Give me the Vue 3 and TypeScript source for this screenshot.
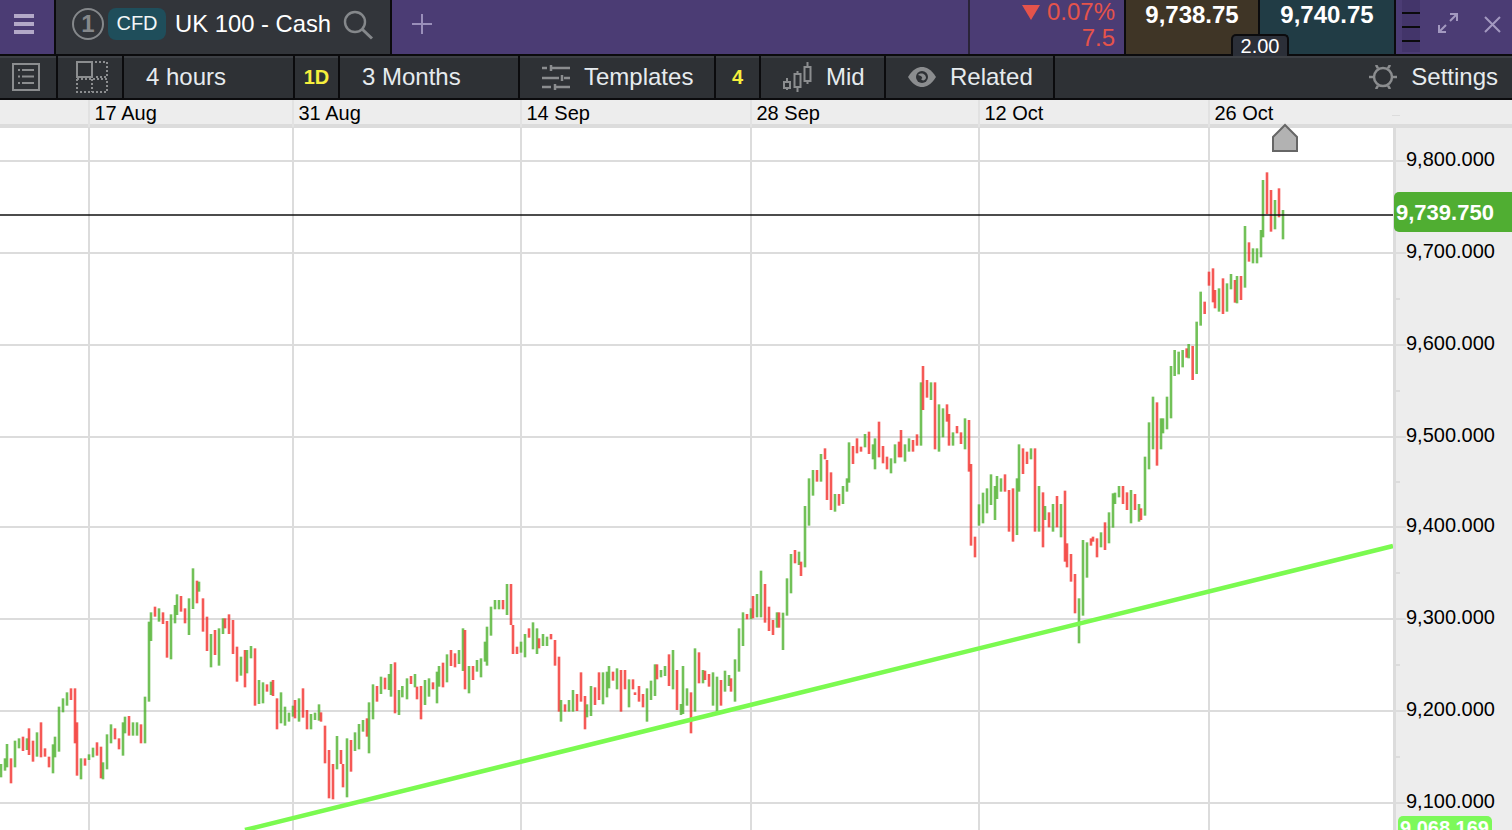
<script setup lang="ts">
interface Bar { x: number; y1: number; y2: number; up: boolean }

const sections: { ox: number; oy: number; data: string }[] = [
  { ox: 0, oy: 560, data: '3g612-652 15g595-632 21g552-622 33r595-670 45g542-622 57g535-565 69r530-573 81g535-570 87r505-585 99r542-605 111g517-590 123r487-592 135r565-590 147r590-622 159g553-640 165g530-592 177g440-575 189g415-457 201g397-437 213r385-420 225r385-550 231r487-647 243g595-658 255r595-617 267g583-600 279g563-592 291r547-587 303r560-655 309g607-658 321g523-628 333g493-550 345r505-538 357r535-568 369g487-587 375g470-520 387r468-527 399g487-527 411g487-527 423r493-550 435g410-550 447g185-425 453g157-243 465r140-170 477g145-185 489r157-192 501r183-293 513g163-298 525g135-190 531g103-165 543r108-155 555r145-190 567g115-225 579g25-147 591r62-130 597g65-95 609r115-215 621r170-273 633g222-322 645r210-285 657g205-317 669g175-222 675r175-205 687r163-222 699r180-282 711r260-365 723g290-347 735r270-382 741g270-340 753g258-295 765r265-437 777g360-432 789g367-430 801r373-395 813g365-405 819r360-408 831r415-508 843g397-490 855g440-497 867g458-485 879g437-470 885r420-475 897g415-485 909r385-473 921r450-508 933g462-508 945g458-480 957g433-482 963r457-485 975r497-610 987r570-715 999r612-718 1011g528-628 1023r570-612 1029r612-682 1041g535-712 1053r540-635 1065g517-573 1077g492-568 1089g480-515 1101r475-530 1107g427-580 1119g373-478 1131r378-425 1143g350-402 1155r353-388 1167g342-390 1173g312-410 1185r307-460 1197g390-465' },
  { ox: 400, oy: 560, data: '7g378-412 21g355-418 33r348-372 45g342-382 51r380-418 63r378-478 75g360-435 87g355-410 99r367-388 111g335-430 117g318-380 129r308-382 141g283-367 153r270-318 165r280-322 177g270-312 189g205-333 195r210-388 207g318-400 219r318-360 231g300-335 243g295-352 255g245-305 261g200-317 273g140-227 285g120-148 297g120-148 309r120-148 321g72-165 333r72-195 339r195-282 351r260-282 363g245-278 375g222-292 387r205-233 399g187-268 411g205-282 417r235-265 429g222-258 441g230-258 453r222-238 465r240-317 477r290-455 483g420-485 495r433-455 507g420-455 519g390-455 531r402-453 543r337-425 555r408-508 561g433-472 573g378-468 585r382-435 597r337-420 609g337-433 621g335-412 627g318-385 639r335-362 651g325-388 663r330-455 675r330-388 687g358-442 699r358-388 705r397-405 717r378-425 729r402-442 741g385-485 753g362-420 765g313-408 771r313-358 783g330-352 795g318-348 807r283-378 819g270-388 831r330-450 843g432-465 849g318-462 861g385-437 873r397-520 885g265-455 897r277-370 909g330-370 915r332-360 927r342-380 939g337-437 951g350-455 963r360-437 975g332-395 987g345-378 993r355-395 1005g298-425 1017g205-335 1029g157-258 1041r162-178 1053g145-178 1059r108-175 1071g102-172 1083g32-172 1095r72-188 1107r140-213 1119r180-225 1131g157-203 1137r157-203' },
  { ox: 780, oy: 350, data: '9g788-900 21g685-797 33g612-730 45r600-640 57g605-645 63r635-678 75g468-652 87g385-527 99g360-437 111r360-395 123g312-395 135r295-328 141r330-450 153r367-480 165g432-485 177r432-467 189g408-462 201g385-425 207g277-398 219r288-342 231r265-310 243r290-305 255g252-292 267r245-312 279g283-328 285g265-358 297r215-322 309r288-340 321r320-358 333g325-370 345g283-340 357r275-322 363r240-322 375g283-335 387g265-305 399r270-305 411r253-287 423g97-287 429r48-180 441r90-143 453g97-150 465r97-298 477g163-305 489g175-262 501r163-215 507r192-287 519g247-287 531r228-250 543r247-282 555g205-298 567r210-365 573r342-587 585r560-622 597g463-527 609g428-520 621g415-490 633g373-465 645g408-510 651g378-447 663g385-425 675r373-425 687r420-545 699r415-575 711g385-555 717g283-425 729r295-372 741r305-342 753g295-328 765r295-545 777g408-545 789r427-592 795g468-510 807r487-532 819g462-545 831r438-532 843g462-562 855r422-635 861r580-652 873r612-695 885r672-790 897g745-880 909g570-797 921g577-683 933r565-587 939r560-575 951r565-622 963g547-592 975r517-600 987g487-580 999g430-533 1005g428-462 1017g408-442 1029r408-462 1041r427-480 1053g420-520 1065r432-480 1077g462-515 1083r475-510 1095g320-497 1107g217-358 1119g140-298 1131r157-347 1143g205-298 1149g205-250 1161g140-238 1173g48-205' },
  { ox: 1165, oy: 280, data: '29g210-288 41g215-283 53g210-262 65r205-233 71g192-235 83r198-300 95g125-282 107g35-137 119r65-102' },
  { ox: 1140, oy: 120, data: '207r455-497 219r445-547 225r510-565 237g505-575 249r475-582 261g490-575 273g462-508 285r480-548 291g468-550 303r468-540 315g318-503 327r367-425 339g385-430 351g385-430 363g330-412 369g180-352 381r157-282 393r210-335 405g240-328 417r205-292 429g270-358' },
]

const bars: Bar[] = sections.flatMap(({ ox, oy, data }) =>
  data.split(' ').map((token) => {
    const m = token.match(/^(\d+)([gr])(\d+)-(\d+)$/) as RegExpMatchArray
    return {
      x: ox + Number(m[1]) / 3,
      y1: oy + Number(m[3]) / 3,
      y2: oy + Number(m[4]) / 3,
      up: m[2] === 'g',
    }
  }),
)

const gridX = [89, 293, 521, 751, 979, 1209]
const gridY = [
  { y: 161, label: '9,800.000' },
  { y: 253, label: '9,700.000' },
  { y: 345, label: '9,600.000' },
  { y: 437, label: '9,500.000' },
  { y: 527, label: '9,400.000' },
  { y: 619, label: '9,300.000' },
  { y: 711, label: '9,200.000' },
  { y: 803, label: '9,100.000' },
]
const minorY = [299, 391, 482, 573, 665, 757]
const dates = ['17 Aug', '31 Aug', '14 Sep', '28 Sep', '12 Oct', '26 Oct']

const AXIS_TOP = 128
const rad = (deg: number) => (deg * Math.PI) / 180
const gearSpokes = [0, 60, 120, 180, 240, 300].map((d) => ({
  x1: 14 + 10 * Math.cos(rad(d)),
  y1: 12 + 10 * Math.sin(rad(d)),
  x2: 14 + 14 * Math.cos(rad(d)),
  y2: 12 + 14 * Math.sin(rad(d)),
}))
</script>

<template>
  <div class="page">
    <header class="topbar">
      <button class="menu" type="button" aria-label="Menu"><i></i><i></i><i></i></button>
      <div class="tab">
        <span class="num">1</span>
        <span class="cfd">CFD</span>
        <span class="name">UK 100 - Cash</span>
        <svg class="search" width="30" height="30" viewBox="0 0 30 30" fill="none">
          <circle cx="12" cy="12" r="10" stroke="#85888b" stroke-width="2.4" />
          <path d="M19.500 19.500 L29 28.500" stroke="#85888b" stroke-width="3" />
        </svg>
      </div>
      <div class="spacer">
        <svg width="22" height="22" viewBox="0 0 22 22">
          <path d="M11 1V21M1 11H21" stroke="#9a8fba" stroke-width="2" />
        </svg>
      </div>
      <div class="change">
        <div class="line pct">
          <svg width="18" height="15" viewBox="0 0 18 15"><path d="M0 0H18L9 15Z" fill="#e5534b" /></svg>
          <span>0.07%</span>
        </div>
        <div class="line pts">7.5</div>
      </div>
      <div class="price bid">9,738.75</div>
      <div class="price ask">9,740.75</div>
      <div class="window">
        <div class="handle"><i></i><i></i><i></i></div>
        <svg class="expand" width="22" height="22" viewBox="0 0 22 22" fill="none" stroke="#a399c0" stroke-width="2">
          <path d="M13 9L20 2M13 2H20V9" />
          <path d="M9 13L2 20M2 13V20H9" />
        </svg>
        <svg class="close" width="17" height="17" viewBox="0 0 17 17" stroke="#a399c0" stroke-width="2">
          <path d="M1 1L16 16M16 1L1 16" />
        </svg>
      </div>
      <div class="spread">2.00</div>
    </header>

    <nav class="toolbar">
      <div class="cell c1">
        <svg width="28" height="28" viewBox="0 0 28 28" fill="none" stroke="#8b8d8f" stroke-width="2">
          <rect x="1" y="1" width="26" height="26" />
          <path d="M6 7H8M10 7H22M6 13.500H8M10 13.500H22M6 20H8M10 20H22" />
        </svg>
      </div>
      <div class="cell c2">
        <svg width="32" height="32" viewBox="0 0 32 32" fill="none" stroke="#8b8d8f" stroke-width="2">
          <rect x="1" y="1" width="15" height="15" />
          <path d="M19 1H31V16H19M1 18V31H31V18H1M16 18V31" stroke-dasharray="2 2" />
        </svg>
      </div>
      <div class="cell c3">4 hours</div>
      <div class="cell c4 accent">1D</div>
      <div class="cell c5">3 Months</div>
      <div class="cell c6">
        <svg width="28" height="26" viewBox="0 0 28 26" fill="none" stroke="#8b8d8f" stroke-width="2.500">
          <path d="M0 4H5M10 4H28M9 1V7" />
          <path d="M0 14H17M22 14H28M20 11V17" />
          <path d="M0 23H9M14 23H28M13 20V26" />
        </svg>
        <span>Templates</span>
      </div>
      <div class="cell c7 accent">4</div>
      <div class="cell c8">
        <svg width="30" height="30" viewBox="0 0 30 30" fill="none" stroke="#8b8d8f" stroke-width="2">
          <path d="M4 16V28M14.500 9V30M24.500 0V22" />
          <rect x="1" y="20" width="6" height="6" fill="#2e3135" />
          <rect x="11.500" y="12" width="6" height="13" fill="#2e3135" />
          <rect x="21.500" y="5" width="6" height="14" fill="#2e3135" />
        </svg>
        <span>Mid</span>
      </div>
      <div class="cell c9">
        <svg width="28" height="20" viewBox="0 0 28 20">
          <path d="M0 10C5 2 10 0 14 0C18 0 23 2 28 10C23 18 18 20 14 20C10 20 5 18 0 10Z" fill="#8b8d8f" />
          <circle cx="14" cy="10" r="6" fill="#2e3135" />
          <path d="M10 8C13 5 18 7 18 11C17 14 14 14 13 12C15 12 15 9 10 8Z" fill="#8b8d8f" />
        </svg>
        <span>Related</span>
      </div>
      <div class="cell c10">
        <svg width="28" height="24" viewBox="0 0 28 24" fill="none" stroke="#8b8d8f" stroke-width="2.500">
          <circle cx="14" cy="12" r="9" />
          <line v-for="(s, i) in gearSpokes" :key="i" :x1="s.x1" :y1="s.y1" :x2="s.x2" :y2="s.y2" />
        </svg>
        <span>Settings</span>
      </div>
    </nav>

    <div class="dates">
      <span v-for="d in dates" :key="d" class="date">{{ d }}</span>
      <i class="date-tick"></i>
    </div>

    <main class="chart">
      <svg class="plot" width="1393" height="702" :viewBox="`0 ${AXIS_TOP} 1393 702`">
        <line v-for="x in gridX" :key="x" class="grid" :x1="x" :x2="x" :y1="AXIS_TOP" y2="830" />
        <line v-for="g in gridY" :key="g.y" class="grid" x1="0" x2="1393" :y1="g.y" :y2="g.y" />
        <line
          v-for="(b, i) in bars"
          :key="i"
          :class="b.up ? 'bar up' : 'bar down'"
          :x1="b.x"
          :x2="b.x"
          :y1="b.y1"
          :y2="b.y2"
        />
        <line class="trend" x1="245" y1="830" x2="1393" y2="546" />
        <line class="last-line" x1="0" x2="1393" y1="215" y2="215" />
        <path class="home" d="M1273 151V137L1285 125L1297 137V151Z" />
      </svg>
      <aside class="axis">
        <template v-for="g in gridY" :key="g.y">
          <i class="tick major" :style="{ top: g.y - AXIS_TOP - 1 + 'px' }"></i>
          <span class="level" :style="{ top: g.y - AXIS_TOP - 13 + 'px' }">{{ g.label }}</span>
        </template>
        <i v-for="y in minorY" :key="y" class="tick minor" :style="{ top: y - AXIS_TOP - 1 + 'px' }"></i>
        <span class="tag current">9,739.750</span>
        <span class="tag lower">9,068.169</span>
      </aside>
    </main>
  </div>
</template>

<style>
html,
body {
  margin: 0;
  height: 100%;
  overflow: hidden;
  background: #fff;
}
</style>

<style scoped>
.page {
  width: 1512px;
  height: 830px;
  display: flex;
  flex-direction: column;
  overflow: hidden;
  font-family: "Liberation Sans", Arial, sans-serif;
}

/* top bar */
.topbar {
  position: relative;
  display: flex;
  height: 54px;
  flex: none;
  background: #4b3c74;
  border-bottom: 2px solid #0b0b0d;
}
.menu {
  width: 56px;
  box-sizing: border-box;
  margin: 0;
  padding: 0 0 6px 14px;
  border: 0;
  border-right: 2px solid #0b0b0d;
  background: #4b3c74;
  display: flex;
  flex-direction: column;
  justify-content: center;
  gap: 4px;
}
.menu i {
  display: block;
  height: 4px;
  width: 20px;
  background: #b3a9c8;
}
.tab {
  width: 336px;
  display: flex;
  align-items: center;
  padding: 0 0 6px 16px;
  box-sizing: border-box;
  background: #32353a;
  border-right: 2px solid #0b0b0d;
}
.num {
  width: 28px;
  height: 28px;
  border: 2px solid #85888b;
  border-radius: 50%;
  color: #85888b;
  font-size: 24px;
  font-weight: 700;
  line-height: 28px;
  text-align: center;
}
.cfd {
  margin-left: 4px;
  width: 58px;
  height: 32px;
  border-radius: 8px;
  background: #1f4e5b;
  color: #f2f6f7;
  font-size: 20px;
  line-height: 31px;
  text-align: center;
}
.name {
  margin-left: 9px;
  color: #fff;
  font-size: 23.8px;
  white-space: nowrap;
}
.search {
  margin-left: 12px;
  margin-top: 2px;
}
.spacer {
  width: 578px;
  display: flex;
  align-items: center;
  padding: 0 0 6px 19px;
  box-sizing: border-box;
  border-right: 2px solid #2a2438;
}
.change {
  width: 156px;
  box-sizing: border-box;
  padding-right: 9px;
  color: #e5534b;
  font-size: 24px;
  border-right: 2px solid #0b0b0d;
  display: flex;
  flex-direction: column;
  align-items: flex-end;
}
.change .line {
  display: flex;
  align-items: center;
  gap: 7px;
}
.change .pct {
  height: 24px;
  line-height: 24px;
}
.change .pts {
  height: 28px;
  line-height: 28px;
}
.price {
  display: flex;
  justify-content: center;
  padding-top: 1px;
  box-sizing: border-box;
  color: #fff;
  font-size: 24px;
  font-weight: 700;
  line-height: 28px;
  border-right: 2px solid #0b0b0d;
}
.bid {
  width: 134px;
  background: #3f3526;
}
.ask {
  width: 136px;
  background: #213c45;
}
.window {
  flex: 1;
  display: flex;
  padding-left: 6px;
}
.handle {
  width: 18px;
  background: #43356a;
  display: flex;
  flex-direction: column;
  gap: 12px;
  padding-top: 12px;
  box-sizing: border-box;
  height: 52px;
}
.handle i {
  display: block;
  height: 2px;
  background: #0b0b0d;
}
.expand {
  margin: 12px 0 0 17px;
}
.close {
  margin: 16px 0 0 25px;
}
.spread {
  position: absolute;
  left: 1231px;
  top: 34px;
  width: 58px;
  height: 22px;
  box-sizing: border-box;
  background: #2b2f38;
  border: 2px solid #0b0b0d;
  border-bottom: 0;
  border-radius: 5px 5px 0 0;
  color: #fff;
  font-size: 20px;
  line-height: 21px;
  text-align: center;
}

/* toolbar */
.toolbar {
  display: flex;
  height: 42px;
  flex: none;
  background: #2e3135;
  box-shadow: inset 0 2px 0 #3d4045;
  border-bottom: 2px solid #0b0b0d;
  color: #e6ebee;
  font-size: 24px;
}
.cell {
  display: flex;
  align-items: center;
  box-sizing: border-box;
  border-right: 2px solid #0b0b0d;
  padding-left: 22px;
  white-space: nowrap;
}
.accent {
  padding-left: 0;
  justify-content: center;
  color: #f6ef3d;
  font-size: 20px;
  font-weight: 700;
}
.c1 { width: 58px; padding-left: 12px; }
.c2 { width: 66px; padding-left: 18px; }
.c3 { width: 171px; }
.c4 { width: 45px; }
.c5 { width: 180px; }
.c6 { width: 196px; gap: 14px; }
.c7 { width: 45px; }
.c8 { width: 125px; gap: 13px; }
.c9 { width: 169px; gap: 14px; }
.c10 {
  flex: 1;
  border-right: 0;
  justify-content: flex-end;
  padding-right: 14px;
  gap: 14px;
}

/* date axis */
.dates {
  position: relative;
  display: grid;
  grid-template-columns: 88px 204px 228px 230px 228px 230px 1fr;
  height: 24px;
  flex: none;
  background: #ededed;
  border-bottom: 4px solid #dcdcdc;
  color: #000;
  font-size: 20px;
  line-height: 27px;
}
.date {
  box-sizing: border-box;
  padding-left: 4.500px;
  border-left: 2px solid #e2e2e2;
}
.date:first-of-type {
  grid-column: 2;
}
.date-tick {
  position: absolute;
  left: 1392px;
  top: 15px;
  width: 8px;
  height: 1px;
  background: #dcdcdc;
}

/* chart */
.chart {
  flex: 1;
  display: flex;
  min-height: 0;
}
.plot {
  position: relative;
  display: block;
  flex: none;
  background: #fff;
  overflow: visible;
}
.grid {
  stroke: #dcdcdc;
  stroke-width: 2;
}
.bar {
  stroke-width: 2.600;
  stroke-opacity: 0.8;
}
.bar.up {
  stroke: #4fb12e;
}
.bar.down {
  stroke: #f2302c;
}
.trend {
  stroke: #7bfa50;
  stroke-width: 4.500;
}
.last-line {
  stroke: #111;
  stroke-width: 1.500;
}
.home {
  fill: #b2b2b2;
  stroke: #666;
  stroke-width: 2;
}
.axis {
  position: relative;
  flex: 1;
  background: #ededed;
  box-shadow: inset 3px 0 0 #dcdcdc;
  color: #000;
  font-size: 20px;
}
.tick {
  position: absolute;
  left: 0;
  height: 2px;
  background: #dcdcdc;
}
.tick.major {
  width: 13px;
}
.tick.minor {
  width: 7px;
}
.level {
  position: absolute;
  left: 13px;
  line-height: 23px;
}
.tag {
  position: absolute;
  box-sizing: border-box;
  color: #fff;
  font-weight: 700;
}
.current {
  left: 1px;
  right: 0;
  top: 64px;
  height: 40px;
  padding-left: 2px;
  border-radius: 5px 0 0 5px;
  background: #50ae32;
  font-size: 22px;
  line-height: 41px;
}
.lower {
  left: 5px;
  width: 94px;
  top: 688px;
  height: 24px;
  padding-left: 2px;
  border-radius: 5px 5px 0 0;
  background: #7df95a;
  font-size: 20px;
  line-height: 24px;
}
</style>
